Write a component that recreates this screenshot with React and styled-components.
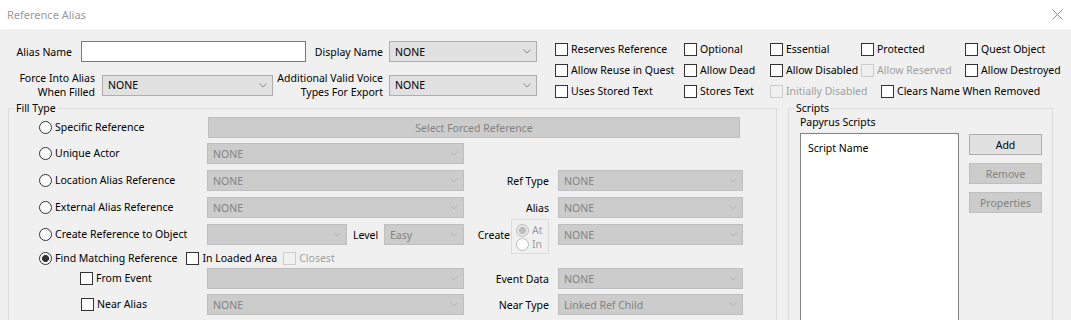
import React from "react";
import styled, { createGlobalStyle } from "styled-components";

const GlobalStyle = createGlobalStyle`
  html, body {
    margin: 0;
    padding: 0;
    background: #f0f0f0;
    overflow: hidden;
  }
  body {
    font-family: "Noto Sans", "DejaVu Sans", sans-serif;
    font-size: 10.5px;
    color: #000;
  }
`;

const Window = styled.div`
  width: 1071px;
  height: 320px;
  display: flex;
  flex-direction: column;
  overflow: hidden;
`;

const TitleBar = styled.div`
  height: 29px;
  flex: none;
  background: #fff;
  display: flex;
  align-items: center;
  justify-content: space-between;
  padding: 0 8px 0 7px;
  color: #999;
  font-size: 11px;
`;

const Body = styled.div`
  flex: 1;
  background: #f0f0f0;
`;

const TopArea = styled.div`
  height: 72px;
  display: flex;
`;

const Fields = styled.div`
  width: 555px;
  flex: none;
  display: flex;
  flex-direction: column;
  gap: 9px;
  padding-top: 12px;
`;

const FieldRow = styled.div`
  display: flex;
  align-items: center;
`;

const FieldLabel = styled.div`
  width: ${(p) => p.$w}px;
  margin-right: ${(p) => p.$gap}px;
  flex: none;
  text-align: right;
  line-height: 14px;
`;

const TextInput = styled.div`
  width: 225px;
  height: 21px;
  box-sizing: border-box;
  border: 1px solid #7a7a7a;
  background: #fff;
`;

const SelectBox = styled.div`
  width: ${(p) => p.$w}px;
  height: 21px;
  flex: none;
  box-sizing: border-box;
  border: 1px solid ${(p) => (p.$disabled ? "#bfbfbf" : "#adadad")};
  background: ${(p) => (p.$disabled ? "#cccccc" : "#e1e1e1")};
  color: ${(p) => (p.$disabled ? "#838383" : "#000")};
  display: flex;
  align-items: center;
  justify-content: space-between;
  padding: 0 5px 0 5px;
  white-space: nowrap;
`;

const Chevron = ({ disabled }) => (
  <svg width="8" height="5" viewBox="0 0 8 5">
    <polyline
      points="0.5,0.5 4,4 7.5,0.5"
      fill="none"
      stroke={disabled ? "#b4b4b4" : "#8a8a8a"}
      strokeWidth="1"
    />
  </svg>
);

const Select = ({ w, value, disabled }) => (
  <SelectBox $w={w} $disabled={disabled}>
    <span>{value}</span>
    <Chevron disabled={disabled} />
  </SelectBox>
);

const ChecksGrid = styled.div`
  display: grid;
  grid-template-columns: 129px 86px 91px 104px auto;
  grid-auto-rows: 13px;
  row-gap: 8px;
  padding-top: 14px;
`;

const CheckLabel = styled.div`
  display: flex;
  align-items: center;
  gap: 3px;
  margin-left: ${(p) => p.$indent || 0}px;
  white-space: nowrap;
  line-height: 13px;
  color: ${(p) => (p.$disabled ? "#a0a0a0" : "#000")};
`;

const Box = styled.span`
  width: 13px;
  height: 13px;
  flex: none;
  box-sizing: border-box;
  border: 1px solid ${(p) => (p.$disabled ? "#cccccc" : "#333")};
  background: ${(p) => (p.$disabled ? "#f0f0f0" : "#fff")};
`;

const Check = ({ children, disabled, indent }) => (
  <CheckLabel $disabled={disabled} $indent={indent}>
    <Box $disabled={disabled} />
    {children}
  </CheckLabel>
);

const RadioDot = styled.span`
  width: 13px;
  height: 13px;
  flex: none;
  box-sizing: border-box;
  border-radius: 50%;
  border: 1px solid ${(p) => (p.$disabled ? "#bcbcbc" : "#333")};
  background: ${(p) =>
    p.$checked
      ? `radial-gradient(circle, ${p.$disabled ? "#bcbcbc" : "#333"} 0 3.2px, ${
          p.$disabled ? "#e6e6e6" : "#fff"
        } 3.8px)`
      : "#fff"};
`;

const RadioLabel = styled.div`
  display: flex;
  align-items: center;
  gap: ${(p) => p.$gap || 3}px;
  white-space: nowrap;
  line-height: 13px;
  color: ${(p) => (p.$disabled ? "#9a9a9a" : "#000")};
`;

const Radio = ({ children, checked, disabled, gap }) => (
  <RadioLabel $disabled={disabled} $gap={gap}>
    <RadioDot $checked={checked} $disabled={disabled} />
    {children}
  </RadioLabel>
);

const Bottom = styled.div`
  display: flex;
  gap: 11px;
  padding-left: 8px;
`;

const Group = styled.fieldset`
  margin: 0;
  padding: 2px 0 0;
  width: ${(p) => p.$w}px;
  height: 240px;
  box-sizing: border-box;
  min-width: 0;
  flex: none;
  border: 1px solid #dcdcdc;
`;

const Legend = styled.legend`
  margin-left: 5px;
  padding: 0 2px;
  line-height: 14px;
`;

const FillRow = styled.div`
  display: flex;
  align-items: flex-start;
  height: ${(p) => p.$h}px;
`;

const LeadCell = styled.div`
  width: 198px;
  height: ${(p) => p.$ch || 21}px;
  flex: none;
  box-sizing: border-box;
  padding-left: ${(p) => p.$pl}px;
  display: flex;
  align-items: center;
`;

const MidCell = styled.div`
  width: 257px;
  height: 21px;
  flex: none;
  display: flex;
  align-items: center;
`;

const InlineLabel = styled.span`
  flex: 1;
  padding-left: 6px;
  white-space: nowrap;
`;

const SideLabel = styled.div`
  width: 86px;
  height: 21px;
  margin-right: 8px;
  flex: none;
  box-sizing: border-box;
  padding-right: 1px;
  display: flex;
  align-items: center;
  justify-content: flex-end;
  white-space: nowrap;
`;

const ForcedButton = styled.div`
  width: 532px;
  height: 21px;
  margin-left: 1px;
  box-sizing: border-box;
  border: 1px solid #bfbfbf;
  background: #cccccc;
  color: #838383;
  display: flex;
  align-items: center;
  justify-content: center;
`;

const CreateBox = styled.div`
  width: 38px;
  height: 35px;
  margin: -5px 0 -9px 1px;
  box-sizing: border-box;
  border: 1px solid #dcdcdc;
  padding: 4px 0 0 4px;
  display: flex;
  flex-direction: column;
  gap: 1px;
`;

const ScriptsInner = styled.div`
  padding-left: 11px;
  margin-top: -2px;
`;

const ScriptsCaption = styled.div`
  line-height: 14px;
  margin-bottom: 4px;
`;

const ScriptsRow = styled.div`
  display: flex;
  align-items: flex-start;
  gap: 10px;
`;

const ScriptList = styled.div`
  width: 159px;
  height: 200px;
  box-sizing: border-box;
  border: 1px solid #828282;
  background: #fff;
  padding: 7px 0 0 7px;
  line-height: 14px;
`;

const ButtonColumn = styled.div`
  display: flex;
  flex-direction: column;
  gap: 8px;
  padding-top: 1px;
`;

const Button = styled.div`
  width: 73px;
  height: 21px;
  box-sizing: border-box;
  border: 1px solid ${(p) => (p.$disabled ? "#bfbfbf" : "#adadad")};
  background: ${(p) => (p.$disabled ? "#cccccc" : "#e1e1e1")};
  color: ${(p) => (p.$disabled ? "#838383" : "#000")};
  display: flex;
  align-items: center;
  justify-content: center;
`;

const CloseIcon = () => (
  <svg width="11" height="11" viewBox="0 0 11 11">
    <path d="M0.5 0.5 L10.5 10.5 M10.5 0.5 L0.5 10.5" stroke="#8c8c8c" strokeWidth="1" />
  </svg>
);

export default function App() {
  return (
    <Window>
      <GlobalStyle />
      <TitleBar>
        <span>Reference Alias</span>
        <CloseIcon />
      </TitleBar>
      <Body>
        <TopArea>
          <Fields>
            <FieldRow>
              <FieldLabel $w={72} $gap={9}>Alias Name</FieldLabel>
              <TextInput />
              <FieldLabel $w={77} $gap={6}>Display Name</FieldLabel>
              <Select w={148} value="NONE" />
            </FieldRow>
            <FieldRow>
              <FieldLabel $w={95} $gap={7}>
                Force Into Alias
                <br />
                When Filled
              </FieldLabel>
              <Select w={171} value="NONE" />
              <FieldLabel $w={110} $gap={6}>
                Additional Valid Voice
                <br />
                Types For Export
              </FieldLabel>
              <Select w={148} value="NONE" />
            </FieldRow>
          </Fields>
          <ChecksGrid>
            <Check>Reserves Reference</Check>
            <Check>Optional</Check>
            <Check>Essential</Check>
            <Check>Protected</Check>
            <Check>Quest Object</Check>
            <Check>Allow Reuse in Quest</Check>
            <Check>Allow Dead</Check>
            <Check>Allow Disabled</Check>
            <Check disabled>Allow Reserved</Check>
            <Check>Allow Destroyed</Check>
            <Check>Uses Stored Text</Check>
            <Check>Stores Text</Check>
            <Check disabled>Initially Disabled</Check>
            <Check indent={20}>Clears Name When Removed</Check>
          </ChecksGrid>
        </TopArea>
        <Bottom>
          <Group $w={769}>
            <Legend>Fill Type</Legend>
            <FillRow $h={26}>
              <LeadCell $pl={30}>
                <Radio>Specific Reference</Radio>
              </LeadCell>
              <ForcedButton>Select Forced Reference</ForcedButton>
            </FillRow>
            <FillRow $h={27}>
              <LeadCell $pl={30}>
                <Radio>Unique Actor</Radio>
              </LeadCell>
              <Select w={257} value="NONE" disabled />
            </FillRow>
            <FillRow $h={27}>
              <LeadCell $pl={30}>
                <Radio>Location Alias Reference</Radio>
              </LeadCell>
              <Select w={257} value="NONE" disabled />
              <SideLabel>Ref Type</SideLabel>
              <Select w={185} value="NONE" disabled />
            </FillRow>
            <FillRow $h={27}>
              <LeadCell $pl={30}>
                <Radio>External Alias Reference</Radio>
              </LeadCell>
              <Select w={257} value="NONE" disabled />
              <SideLabel>Alias</SideLabel>
              <Select w={185} value="NONE" disabled />
            </FillRow>
            <FillRow $h={26}>
              <LeadCell $pl={30}>
                <Radio>Create Reference to Object</Radio>
              </LeadCell>
              <MidCell>
                <Select w={140} value="" disabled />
                <InlineLabel>Level</InlineLabel>
                <Select w={80} value="Easy" disabled />
              </MidCell>
              <SideLabel>
                Create
                <CreateBox>
                  <Radio checked disabled gap={3}>At</Radio>
                  <Radio disabled gap={3}>In</Radio>
                </CreateBox>
              </SideLabel>
              <Select w={185} value="NONE" disabled />
            </FillRow>
            <FillRow $h={18}>
              <LeadCell $pl={30} $ch={16}>
                <Radio checked>Find Matching Reference</Radio>
                <Check indent={9}>In Loaded Area</Check>
                <Check indent={6} disabled>Closest</Check>
              </LeadCell>
            </FillRow>
            <FillRow $h={26}>
              <LeadCell $pl={71}>
                <Check>From Event</Check>
              </LeadCell>
              <Select w={257} value="" disabled />
              <SideLabel>Event Data</SideLabel>
              <Select w={185} value="NONE" disabled />
            </FillRow>
            <FillRow $h={21}>
              <LeadCell $pl={72}>
                <Check>Near Alias</Check>
              </LeadCell>
              <Select w={257} value="NONE" disabled />
              <SideLabel>Near Type</SideLabel>
              <Select w={185} value="Linked Ref Child" disabled />
            </FillRow>
          </Group>
          <Group $w={265}>
            <Legend>Scripts</Legend>
            <ScriptsInner>
              <ScriptsCaption>Papyrus Scripts</ScriptsCaption>
              <ScriptsRow>
                <ScriptList>Script Name</ScriptList>
                <ButtonColumn>
                  <Button>Add</Button>
                  <Button $disabled>Remove</Button>
                  <Button $disabled>Properties</Button>
                </ButtonColumn>
              </ScriptsRow>
            </ScriptsInner>
          </Group>
        </Bottom>
      </Body>
    </Window>
  );
}
